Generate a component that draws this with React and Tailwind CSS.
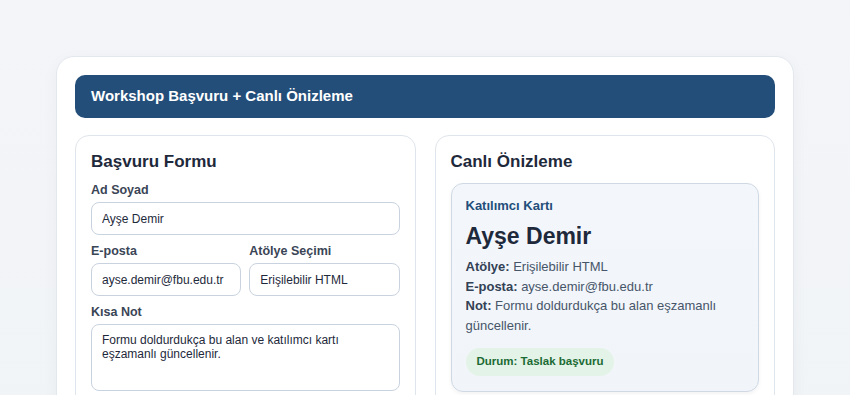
export default function App() {
  const name = "Ayşe Demir";
  const email = "ayse.demir@fbu.edu.tr";
  const workshop = "Erişilebilir HTML";
  const note = "Formu doldurdukça bu alan ve katılımcı kartı eşzamanlı güncellenir.";

  return (
    <div className="min-h-screen bg-gradient-to-b from-[#f3f5f8] to-[#f1f4f7] px-14 pt-14 pb-10 font-['Liberation_Sans',Arial,sans-serif]">
      <div className="rounded-[18px] border border-[#e3e8ee] bg-white p-[18px] shadow-[0_4px_16px_rgba(15,23,42,0.04)]">
        {/* Header */}
        <div className="flex h-[43px] items-center rounded-[10px] bg-[#234e7a] px-4">
          <h1 className="text-[15px] font-bold text-white">Workshop Başvuru + Canlı Önizleme</h1>
        </div>

        <div className="mt-[17px] grid grid-cols-2 gap-[19px]">
          {/* Form */}
          <div className="rounded-[14px] border border-[#dfe5ec] bg-white px-[15px] pt-[15px] pb-4">
            <h2 className="text-[17px] font-bold leading-[22px] text-[#1e293b]">Başvuru Formu</h2>

            <label className="mt-[9px] block text-[12.5px] font-bold leading-[16px] text-[#3a4556]">Ad Soyad</label>
            <input
              readOnly
              value={name}
              className="mt-[4px] h-[33px] w-full rounded-[8px] border border-[#c9d3df] bg-white px-[10px] text-[12px] text-[#1e293b] outline-none"
            />

            <div className="mt-[8px] grid grid-cols-2 gap-[8px]">
              <div>
                <label className="block text-[12.5px] font-bold leading-[16px] text-[#3a4556]">E-posta</label>
                <input
                  readOnly
                  value={email}
                  className="mt-[4px] h-[33px] w-full rounded-[8px] border border-[#c9d3df] bg-white px-[10px] text-[12px] text-[#1e293b] outline-none"
                />
              </div>
              <div>
                <label className="block text-[12.5px] font-bold leading-[16px] text-[#3a4556]">Atölye Seçimi</label>
                <input
                  readOnly
                  value={workshop}
                  className="mt-[4px] h-[33px] w-full rounded-[8px] border border-[#c9d3df] bg-white px-[10px] text-[12px] text-[#1e293b] outline-none"
                />
              </div>
            </div>

            <label className="mt-[8px] block text-[12.5px] font-bold leading-[16px] text-[#3a4556]">Kısa Not</label>
            <textarea
              readOnly
              value={note}
              className="mt-[4px] block h-[67px] w-full resize-none rounded-[8px] border border-[#c9d3df] bg-white px-[10px] py-[8px] text-[12px] leading-[14px] text-[#1e293b] outline-none"
            />
          </div>

          {/* Preview */}
          <div className="rounded-[14px] border border-[#dfe5ec] bg-white px-[15px] pt-[15px] pb-4">
            <h2 className="text-[17px] font-bold leading-[22px] text-[#1e293b]">Canlı Önizleme</h2>

            <div className="mt-[10px] rounded-[12px] border border-[#cfd8e3] bg-gradient-to-b from-[#f3f7fc] to-[#f1f5f9] px-[14px] pt-[14px] pb-[15px] shadow-[0_2px_4px_rgba(15,23,42,0.05)]">
              <div className="text-[13px] font-bold leading-[16px] text-[#234e7a]">Katılımcı Kartı</div>
              <div className="mt-[8px] text-[23px] font-bold leading-[28px] text-[#1e293b]">{name}</div>
              <div className="mt-[7px] text-[13px] leading-[19.5px] text-[#475569]">
                <p>
                  <span className="font-bold text-[#334155]">Atölye:</span> {workshop}
                </p>
                <p>
                  <span className="font-bold text-[#334155]">E-posta:</span> {email}
                </p>
                <p>
                  <span className="font-bold text-[#334155]">Not:</span> Formu doldurdukça bu alan eşzamanlı güncellenir.
                </p>
              </div>
              <span className="mt-[13px] inline-flex h-[28px] items-center rounded-full bg-[#e4f3e8] px-[11px] text-[11.5px] font-bold text-[#1b6b34]">
                Durum: Taslak başvuru
              </span>
            </div>
          </div>
        </div>
      </div>
    </div>
  );
}
